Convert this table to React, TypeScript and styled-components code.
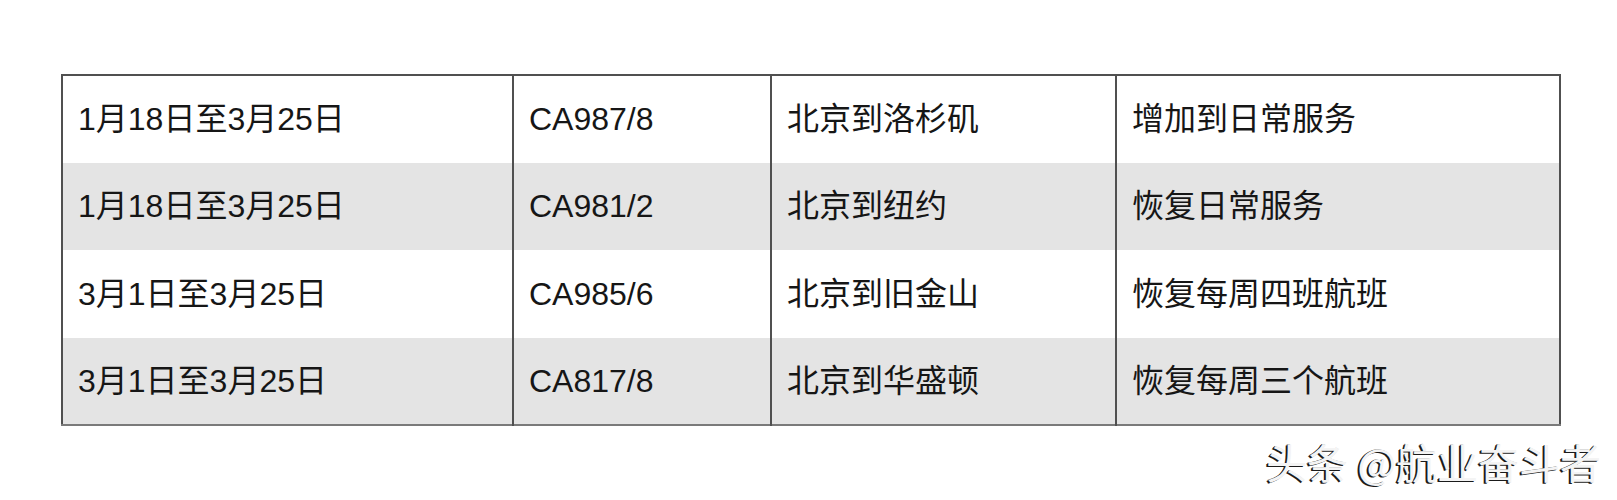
import React from "react";
import styled, { createGlobalStyle } from "styled-components";

const GlobalStyle = createGlobalStyle`
  html, body {
    margin: 0;
    padding: 0;
    background: #ffffff;
  }
  body {
    font-family: "Liberation Sans", "Noto Sans CJK SC", sans-serif;
    color: #161616;
  }
`;

const Page = styled.div`
  width: 1617px;
  height: 500px;
  padding: 74px 0 0 61px;
  box-sizing: border-box;
  display: flex;
  flex-direction: column;
`;

const Table = styled.table`
  width: 1498px;
  border-collapse: collapse;
  table-layout: fixed;
  border: 2px solid #505050;
  border-bottom-color: #7a7a7a;
`;

const Row = styled.tr<{ $shaded: boolean }>`
  height: 87.5px;
  background: ${(p) => (p.$shaded ? "#e4e4e4" : "#ffffff")};
`;

const Cell = styled.td`
  padding: 0 0 0 15px;
  border-left: 2px solid #505050;
  font-size: 32px;
  line-height: 1;
  vertical-align: middle;
  white-space: nowrap;
  &:first-child {
    border-left: none;
  }
`;

const Watermark = styled.div`
  display: flex;
  justify-content: flex-end;
  padding-right: 16px;
  margin-top: 13px;
  font-family: "Noto Sans CJK SC", sans-serif;
  font-size: 41px;
  line-height: 1.1;
  color: #f4f4f4;
  text-shadow: -2px 1px 0 #1a1a1a, -1px 0 0 #3a3a3a;
`;

const rows = [
  ["1月18日至3月25日", "CA987/8", "北京到洛杉矶", "增加到日常服务"],
  ["1月18日至3月25日", "CA981/2", "北京到纽约", "恢复日常服务"],
  ["3月1日至3月25日", "CA985/6", "北京到旧金山", "恢复每周四班航班"],
  ["3月1日至3月25日", "CA817/8", "北京到华盛顿", "恢复每周三个航班"],
];

const widths = [451, 258, 345, 444];

export default function App() {
  return (
    <>
      <GlobalStyle />
      <Page>
        <Table>
          <colgroup>
            {widths.map((w, i) => (
              <col key={i} style={{ width: w }} />
            ))}
          </colgroup>
          <tbody>
            {rows.map((r, i) => (
              <Row key={i} $shaded={i % 2 === 1}>
                {r.map((c, j) => (
                  <Cell key={j}>{c}</Cell>
                ))}
              </Row>
            ))}
          </tbody>
        </Table>
        <Watermark>头条 @航业奋斗者</Watermark>
      </Page>
    </>
  );
}
